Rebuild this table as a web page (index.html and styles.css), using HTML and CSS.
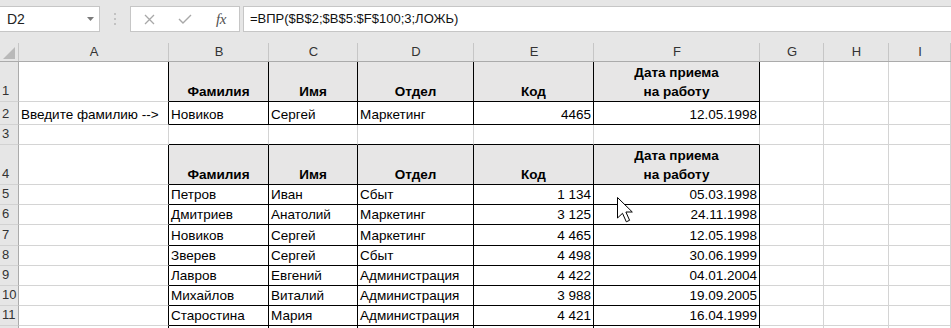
FILE: index.html
```html
<!DOCTYPE html>
<html lang="ru">
<head>
<meta charset="utf-8">
<title>ВПР</title>
<link rel="stylesheet" href="styles.css">
</head>
<body>
<div class="formula-bar">
  <div class="namebox"><span>D2</span><svg class="caret" width="7" height="4" viewBox="0 0 7 4"><path d="M0 0h7L3.5 4z" fill="#7a7a7a"/></svg></div>
  <div class="grip"><svg width="2" height="12" viewBox="0 0 2 12"><rect x="0" y="0" width="2" height="2" fill="#c2c2c2"/><rect x="0" y="5" width="2" height="2" fill="#c2c2c2"/><rect x="0" y="10" width="2" height="2" fill="#c2c2c2"/></svg></div>
  <div class="fxbox">
    <span class="fxbtn"><svg width="11" height="11" viewBox="0 0 11 11"><path d="M1 1l9 9M10 1l-9 9" stroke="#a8a8a8" stroke-width="1.3" fill="none"/></svg></span>
    <span class="fxbtn"><svg width="14" height="10" viewBox="0 0 14 10"><path d="M1 5l4 4 8-8" stroke="#a8a8a8" stroke-width="1.4" fill="none"/></svg></span>
    <span class="fxbtn fx">fx</span>
  </div>
  <div class="formula">=ВПР($B$2;$B$5:$F$100;3;ЛОЖЬ)</div>
</div>

<div class="sheet">
  <div class="corner"><svg width="12" height="12" viewBox="0 0 12 12"><path d="M12 0V12H0z" fill="#b9b9b9"/></svg></div>
  <div class="ch">A</div><div class="ch">B</div><div class="ch">C</div><div class="ch">D</div><div class="ch">E</div><div class="ch">F</div><div class="ch">G</div><div class="ch">H</div><div class="ch">I</div>

  <div class="rh">1</div><div class="c bl"></div>
  <div class="c th">Фамилия</div><div class="c th">Имя</div><div class="c th">Отдел</div><div class="c th">Код</div><div class="c th">Дата приема<br>на работу</div>
  <div class="c"></div><div class="c"></div><div class="c"></div>

  <div class="rh">2</div><div class="c bl">Введите фамилию --&gt;</div>
  <div class="c td">Новиков</div><div class="c td">Сергей</div><div class="c td">Маркетинг</div><div class="c td num">4465</div><div class="c td num">12.05.1998</div>
  <div class="c"></div><div class="c"></div><div class="c"></div>

  <div class="rh">3</div><div class="c"></div>
  <div class="c bt"></div><div class="c bt"></div><div class="c bt"></div><div class="c bt"></div><div class="c bt"></div>
  <div class="c"></div><div class="c"></div><div class="c"></div>

  <div class="rh">4</div><div class="c bl"></div>
  <div class="c th">Фамилия</div><div class="c th">Имя</div><div class="c th">Отдел</div><div class="c th">Код</div><div class="c th">Дата приема<br>на работу</div>
  <div class="c"></div><div class="c"></div><div class="c"></div>

  <div class="rh">5</div><div class="c bl"></div>
  <div class="c td">Петров</div><div class="c td">Иван</div><div class="c td">Сбыт</div><div class="c td num">1&nbsp;134</div><div class="c td num">05.03.1998</div>
  <div class="c"></div><div class="c"></div><div class="c"></div>

  <div class="rh">6</div><div class="c bl"></div>
  <div class="c td">Дмитриев</div><div class="c td">Анатолий</div><div class="c td">Маркетинг</div><div class="c td num">3&nbsp;125</div><div class="c td num">24.11.1998</div>
  <div class="c"></div><div class="c"></div><div class="c"></div>

  <div class="rh">7</div><div class="c bl"></div>
  <div class="c td">Новиков</div><div class="c td">Сергей</div><div class="c td">Маркетинг</div><div class="c td num">4&nbsp;465</div><div class="c td num">12.05.1998</div>
  <div class="c"></div><div class="c"></div><div class="c"></div>

  <div class="rh">8</div><div class="c bl"></div>
  <div class="c td">Зверев</div><div class="c td">Сергей</div><div class="c td">Сбыт</div><div class="c td num">4&nbsp;498</div><div class="c td num">30.06.1999</div>
  <div class="c"></div><div class="c"></div><div class="c"></div>

  <div class="rh">9</div><div class="c bl"></div>
  <div class="c td">Лавров</div><div class="c td">Евгений</div><div class="c td">Администрация</div><div class="c td num">4&nbsp;422</div><div class="c td num">04.01.2004</div>
  <div class="c"></div><div class="c"></div><div class="c"></div>

  <div class="rh">10</div><div class="c bl"></div>
  <div class="c td">Михайлов</div><div class="c td">Виталий</div><div class="c td">Администрация</div><div class="c td num">3&nbsp;988</div><div class="c td num">19.09.2005</div>
  <div class="c"></div><div class="c"></div><div class="c"></div>

  <div class="rh">11</div><div class="c bl"></div>
  <div class="c td">Старостина</div><div class="c td">Мария</div><div class="c td">Администрация</div><div class="c td num">4&nbsp;421</div><div class="c td num">16.04.1999</div>
  <div class="c"></div><div class="c"></div><div class="c"></div>

  <div class="rh edge"></div><div class="c bl edge"></div>
  <div class="c td edge"></div><div class="c td edge"></div><div class="c td edge"></div><div class="c td edge"></div><div class="c td edge"></div>
  <div class="c edge"></div><div class="c edge"></div><div class="c edge"></div>
</div>

<svg class="cursor" width="17" height="27" viewBox="0 0 17 27"><path d="M0.5 0.5V21L5.5 16.3L9.3 24.8L12.6 23.3L8.9 15H15.3Z" fill="#fff" stroke="#000" stroke-width="1" stroke-linejoin="miter"/></svg>
</body>
</html>
```

FILE: styles.css
```css
* { box-sizing: border-box; }

html, body {
  margin: 0;
  padding: 0;
}

body {
  width: 951px;
  height: 328px;
  overflow: hidden;
  background: #fff;
  font-family: "Liberation Sans", Arial, sans-serif;
  color: #000;
  position: relative;
}

/* ---------- formula bar ---------- */
.formula-bar {
  height: 40px;
  background: #e6e6e6;
  display: flex;
  align-items: flex-start;
  padding-top: 6px;
}

.namebox {
  width: 101px;
  height: 26px;
  margin-left: -1px;
  background: #fff;
  border: 1px solid #c6c6c6;
  display: flex;
  align-items: center;
  justify-content: space-between;
  padding: 0 5px 0 7px;
  font-size: 14px;
  color: #222;
}

.caret { margin-top: -1px; }

.grip {
  width: 30px;
  height: 26px;
  display: flex;
  align-items: center;
  justify-content: center;
}

.fxbox {
  width: 110px;
  height: 26px;
  background: #fff;
  border: 1px solid #c6c6c6;
  display: flex;
  align-items: center;
}

.fxbtn {
  width: 36px;
  display: flex;
  justify-content: center;
  align-items: center;
}

.fx {
  font-family: "Liberation Serif", serif;
  font-style: italic;
  font-size: 15px;
  color: #505050;
  letter-spacing: -0.5px;
}

.formula {
  flex: 1;
  height: 26px;
  margin-left: 3px;
  margin-right: -2px;
  background: #fff;
  border: 1px solid #c6c6c6;
  padding-left: 6px;
  font-size: 13px;
  line-height: 24px;
  color: #111;
  white-space: nowrap;
}

/* ---------- sheet ---------- */
.sheet {
  display: grid;
  grid-template-columns: 19px 150px 100px 89px 116px 120px 166px 64px 65px 1fr;
  grid-template-rows: 22px 40px 23px 20px 40px 20px 20px 21px 20px 20px 20px 20px 2px;
}

.corner {
  background-color: #e6e6e6;
  background-image: linear-gradient(#c6c6c6, #c6c6c6);
  background-size: 1px 18px;
  background-position: right bottom;
  background-repeat: no-repeat;
  border-bottom: 1px solid #ababab;
  display: flex;
  justify-content: flex-end;
  align-items: flex-end;
  padding: 0 4px 2px 0;
}

.ch {
  background-color: #e6e6e6;
  background-image: linear-gradient(#c6c6c6, #c6c6c6);
  background-size: 1px 18px;
  background-position: right bottom;
  background-repeat: no-repeat;
  border-bottom: 1px solid #ababab;
  display: flex;
  justify-content: center;
  align-items: center;
  padding-top: 2px;
  font-size: 13px;
  color: #333;
}

.rh {
  background: #e6e6e6;
  border-right: 1px solid #ababab;
  border-bottom: 1px solid #d2d2d2;
  display: flex;
  align-items: flex-end;
  padding: 0 0 1px 2px;
  font-size: 13px;
  line-height: 19px;
  color: #333;
}

.c {
  border-right: 1px solid #d4d4d4;
  border-bottom: 1px solid #d4d4d4;
  display: flex;
  align-items: flex-end;
  padding: 0 2px 0 2px;
  font-size: 13.5px;
  line-height: 19px;
  white-space: nowrap;
  overflow: hidden;
}

.th {
  background: #e7e6e6;
  font-weight: bold;
  justify-content: center;
  text-align: center;
  border-right-color: #000;
  border-bottom-color: #000;
}

.td {
  border-right-color: #000;
  border-bottom-color: #000;
}

.num { justify-content: flex-end; }

.bl { border-right-color: #000; }

.bt { border-bottom-color: #000; }

/* partially visible last row at the bottom edge */
.edge { border-bottom: none; padding: 0; }

/* mouse pointer lying over the sheet */
.cursor {
  position: absolute;
  left: 617px;
  top: 197px;
}
```
